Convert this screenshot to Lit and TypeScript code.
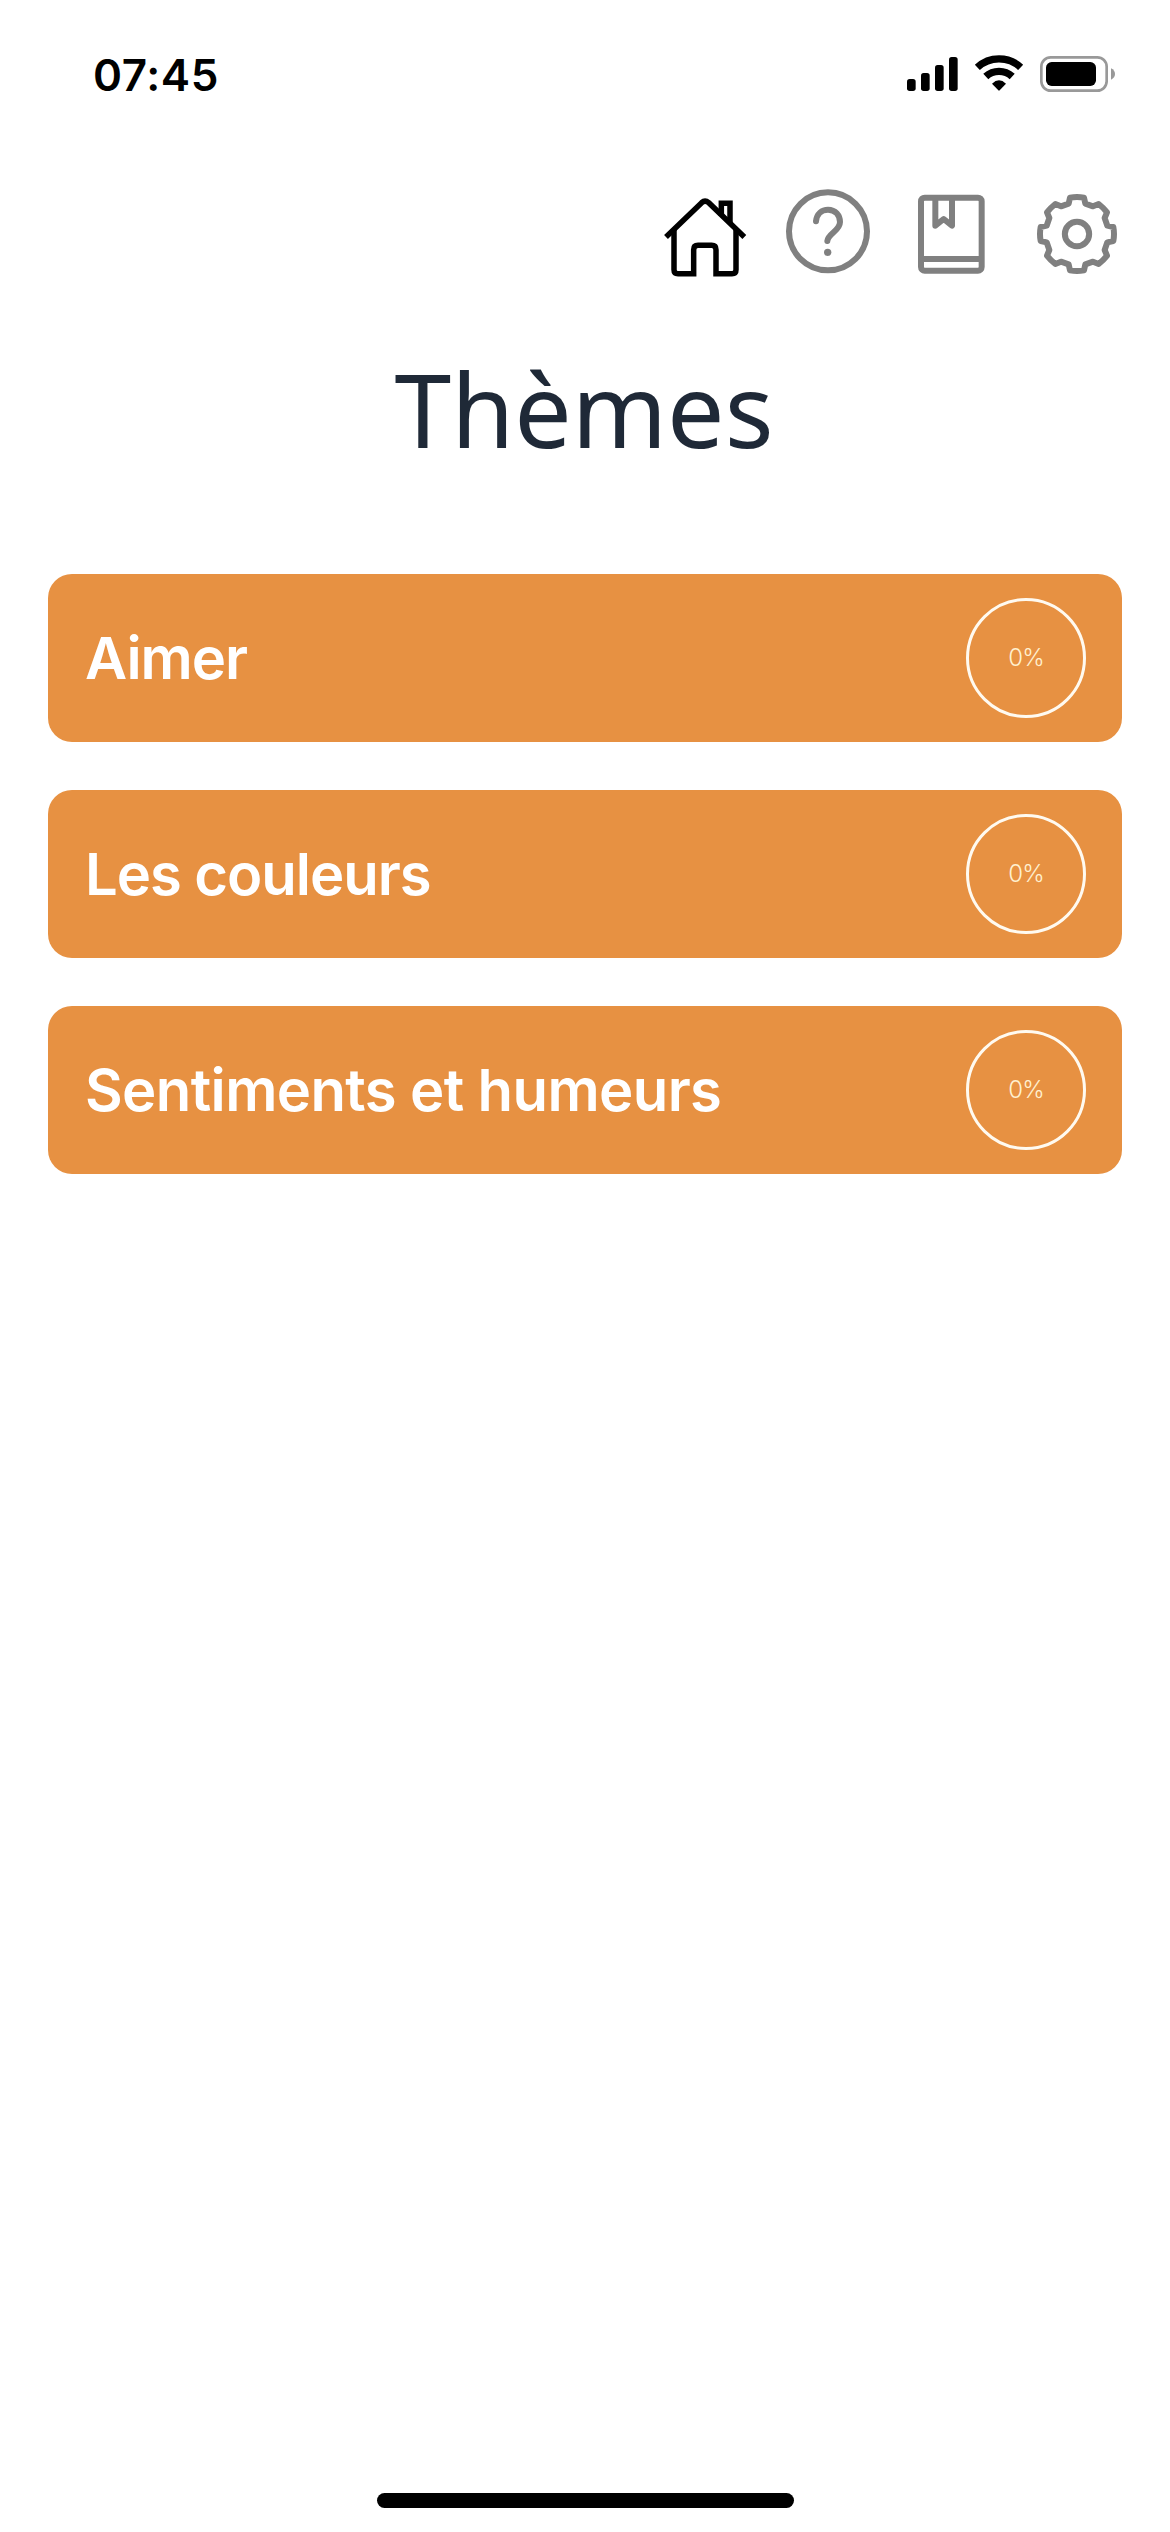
import { LitElement, html, css } from "lit";
import { customElement, property } from "lit/decorators.js";

@customElement("status-bar")
class StatusBar extends LitElement {
  static styles = css`
    :host { display: flex; justify-content: space-between; height: 140px; padding: 40px 40px 0 93px; box-sizing: border-box; color: #000; }
    .time { font: 600 44px/70px Inter, "Liberation Sans", sans-serif; letter-spacing: 0.6px; }
    .icons { display: block; width: 240px; height: 70px; }
  `;
  render() {
    return html`
      <div class="time">07:45</div>
      <svg class="icons" viewBox="0 0 720 210">
        <rect x="51" y="117" width="26" height="36" rx="8" />
        <rect x="93" y="99" width="26" height="54" rx="8" />
        <rect x="135" y="75" width="26" height="78" rx="8" />
        <rect x="177" y="51" width="26" height="102" rx="8" />
        <g fill="none" stroke="#000" stroke-width="22">
          <path d="M262 82A95.500 95.500 0 0 1 392 82" />
          <path d="M287.400 109.600A58 58 0 0 1 366.600 109.600" />
        </g>
        <path d="M306 131Q327 111 348 131L329 151Q327 153 325 151Z" />
        <rect x="454" y="52" width="196" height="100" rx="28" fill="none" stroke="#999" stroke-width="8" />
        <rect x="468" y="66" width="150" height="72" rx="17" />
        <path d="M663 85Q675 91 675 102Q675 113 663 119Z" fill="#999" />
      </svg>
    `;
  }
}

@customElement("top-nav")
class TopNav extends LitElement {
  static styles = css`
    :host { display: flex; justify-content: flex-end; height: 110px; margin-top: 40px; padding-right: 30px; }
    .icon { display: block; width: 120px; height: 110px; fill: none; stroke: #808080; stroke-width: 18; }
    .active { stroke: #000; stroke-width: 16.5; }
    .help { margin-right: 10px; }
    .dot { fill: #808080; stroke: none; }
  `;
  render() {
    return html`
      <svg class="icon active" viewBox="0 0 360 330">
        <path d="M214 108V70H240V130" />
        <path d="M48 171L155 68Q165 59 176 68L283 171" />
        <path d="M72 148V269Q72 281 84 281H131V209Q131 196 144 196H185Q198 196 198 209V281H246Q258 281 258 269V148" />
      </svg>
      <svg class="icon help" viewBox="360 0 360 330">
        <circle cx="534" cy="154" r="117" />
        <path d="M498 124C500 101 516 89 534 89C556 89 570 106 570 126C570 153 534 160 532 183" stroke-linecap="round" />
        <circle class="dot" cx="533" cy="217" r="11" />
      </svg>
      <svg class="icon" viewBox="0 0 360 330">
        <rect x="63" y="53" width="182" height="219" rx="11" />
        <path d="M63 237H245" />
        <path d="M106 53V137L131 117L156 137V53" stroke-linejoin="round" />
      </svg>
      <svg class="icon" viewBox="360 0 360 330">
        <g transform="translate(531 162)">
          <circle r="36.500" />
          <path stroke-linejoin="round" d="M-21-109Q0-113 21-109L25-91L48-83L65-90Q79-79 90-65L83-48L91-25L109-21Q113 0 109 21L91 25L83 48L90 65Q79 79 65 90L48 83L25 91L21 109Q0 113-21 109L-25 91L-48 83L-65 90Q-79 79-90 65L-83 48L-91 25L-109 21Q-113 0-109-21L-91-25L-83-48L-90-65Q-79-79-65-90L-48-83L-25-91Z" />
        </g>
      </svg>
    `;
  }
}

@customElement("theme-card")
class ThemeCard extends LitElement {
  @property() label = "";
  @property({ type: Number }) progress = 0;
  @property({ type: Number }) tracking = 0;
  static styles = css`
    :host { display: flex; align-items: center; justify-content: space-between; box-sizing: border-box; height: 168px; padding: 0 36px 0 37px; border-radius: 24px; background: #e79142; color: #fff; }
    .label { font: 600 58px/72px Inter, "Liberation Sans", sans-serif; white-space: nowrap; }
    .ring { display: flex; align-items: center; justify-content: center; box-sizing: border-box; width: 120px; height: 120px; border: 3px solid #fffaf0; border-radius: 50%; font: 300 24px/30px Inter, "Liberation Sans", sans-serif; letter-spacing: -0.8px; color: #fff0cf; }
  `;
  render() {
    return html`<span class="label" style="letter-spacing:${this.tracking}px">${this.label}</span><span class="ring">${this.progress}%</span>`;
  }
}

@customElement("app-root")
class AppRoot extends LitElement {
  static styles = css`
    :host { display: flex; flex-direction: column; box-sizing: border-box; width: 1170px; height: 2532px; background: #fff; overflow: hidden; }
    .title { margin: 49px 2px 0 0; height: 140px; font: 400 102px/140px "Noto Sans", "Open Sans", sans-serif; color: #1f2937; text-align: center; }
    .list { display: flex; flex-direction: column; gap: 48px; margin-top: 95px; padding: 0 48px; }
    .home-indicator { width: 417px; height: 15px; margin: auto auto 24px; border-radius: 8px; background: #000; }
  `;
  private themes = [
    { label: "Aimer", tracking: -1 },
    { label: "Les couleurs", tracking: -1.05 },
    { label: "Sentiments et humeurs", tracking: -0.6 },
  ];
  render() {
    return html`
      <status-bar></status-bar>
      <top-nav></top-nav>
      <h1 class="title">Thèmes</h1>
      <div class="list">
        ${this.themes.map((t) => html`<theme-card .label=${t.label} .tracking=${t.tracking} .progress=${0}></theme-card>`)}
      </div>
      <div class="home-indicator"></div>
    `;
  }
}
